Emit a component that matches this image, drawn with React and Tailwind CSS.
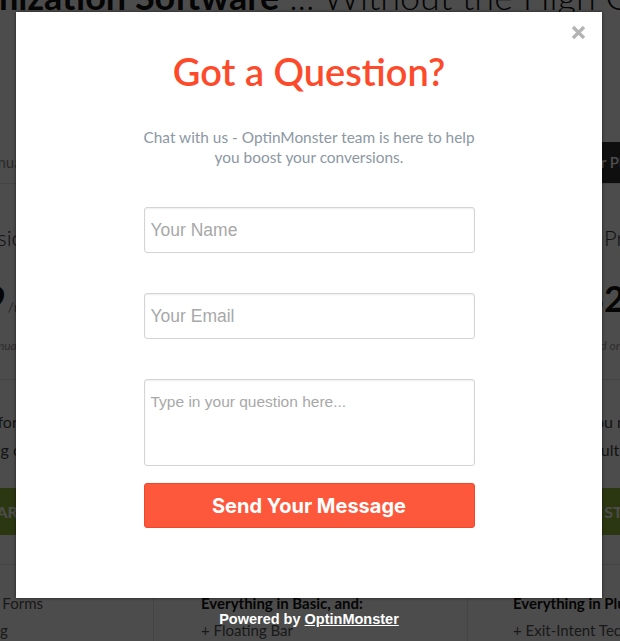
import React from "react";

function CloseIcon() {
  return (
    <svg width="15" height="15" viewBox="0 0 15 15" fill="none">
      <path d="M2 2 L13 13 M13 2 L2 13" stroke="#b4b4b4" strokeWidth="3.4" />
    </svg>
  );
}

function BackgroundPage() {
  return (
    <div className="flex flex-col whitespace-nowrap">
      {/* headline, mostly hidden above the popup */}
      <div className="-ml-[84px] -mt-[25px] text-[36px] leading-[42px] text-[#111]">
        <span className="font-bold">Optimization Software</span>
        <span className="font-light"> ... Without the High Cost</span>
      </div>

      {/* billing toggle band */}
      <div className="mt-[125px] flex h-[42px] items-center border-b border-[#e3e3e3]">
        <div className="-ml-[21px] text-[15px] text-[#8a8a8a]">Annually</div>
        <div className="ml-auto flex h-full w-[64px] items-center bg-[#333] pl-[20px] text-[15px] font-semibold text-white">
          Your Plans
        </div>
      </div>

      <div className="-ml-[67px] grid grid-cols-[220px_314px_220px]">
        {/* plan names */}
        <div className="pl-[40px] pt-[40px] text-[22px] font-light leading-[28px]">Basic</div>
        <div className="pl-[120px] pt-[40px] text-[22px] font-light leading-[28px]">Plus</div>
        <div className="pl-[137px] pt-[40px] text-[22px] font-light leading-[28px]">Pro</div>

        {/* prices */}
        <div className="mt-[26px] flex items-baseline pl-[31px]">
          <span className="text-[36px] font-bold leading-[40px] text-[#111]">$9</span>
          <span className="ml-[2px] text-[14px] text-[#888]">/mo</span>
        </div>
        <div className="mt-[26px] flex items-baseline pl-[110px]">
          <span className="text-[36px] font-bold leading-[40px] text-[#111]">$19</span>
          <span className="ml-[2px] text-[14px] text-[#888]">/mo</span>
        </div>
        <div className="mt-[26px] flex items-baseline pl-[116px]">
          <span className="text-[36px] font-bold leading-[40px] text-[#111]">$29</span>
          <span className="ml-[2px] text-[14px] text-[#888]">/mo</span>
        </div>

        {/* billing notes */}
        <div className="mt-[20px] pl-[23px] text-[12px] italic leading-[16px] text-[#999]">billed annually</div>
        <div className="mt-[20px] pl-[110px] text-[12px] italic leading-[16px] text-[#999]">billed annually</div>
        <div className="mt-[20px] pl-[113px] text-[12px] italic leading-[16px] text-[#999]">billed once a year</div>
      </div>

      <div className="mt-[25px] border-t border-[#e3e3e3]" />

      <div className="-ml-[67px] grid grid-cols-[220px_314px_220px] text-[16px] leading-[28px] text-[#444]">
        <div className="pt-[28px]">
          <div className="pl-[27px]">Ideal for small sites</div>
          <div className="pl-[39px]">using conversion tools</div>
        </div>
        <div className="pl-[60px] pt-[28px]">
          <div>Grow your list faster</div>
          <div>with more campaigns</div>
        </div>
        <div className="pt-[28px]">
          <div className="pl-[120px]">you must have</div>
          <div className="pl-[113px]">results fast</div>
        </div>

        <div className="ml-[4px] mt-[24px] flex h-[47px] w-[120px] items-center justify-center bg-[#8fb83a] text-[16px] font-bold uppercase text-white">
          Get Started
        </div>
        <div className="ml-[100px] mt-[24px] flex h-[47px] w-[120px] items-center justify-center bg-[#8fb83a] text-[16px] font-bold uppercase text-white">
          Get Started
        </div>
        <div className="ml-[55px] mt-[24px] flex h-[47px] w-[200px] items-center justify-center bg-[#8fb83a] text-[16px] font-bold uppercase text-white">
          Get Started
        </div>
      </div>

      <div className="mt-[29px] border-t border-[#e3e3e3]" />

      <div className="-ml-[67px] grid grid-cols-[220px_314px_220px] text-[15px] leading-[27px] text-[#555]">
        <div className="pt-[25px]">
          <div className="pl-[4px]">+ Sidebar Forms</div>
          <div className="-ml-[14px]">+ A/B Testing</div>
        </div>
        <div className="border-l border-[#e3e3e3] pl-[47px] pt-[25px]">
          <div className="font-bold text-[#111]">Everything in Basic, and:</div>
          <div>+ Floating Bar</div>
        </div>
        <div className="border-l border-[#e3e3e3] pl-[45px] pt-[25px]">
          <div className="font-bold text-[#111]">Everything in Plus, and:</div>
          <div>+ Exit-Intent Technology</div>
        </div>
      </div>
    </div>
  );
}

function Field({ placeholder }) {
  return (
    <input
      type="text"
      placeholder={placeholder}
      className="mt-[40px] h-[46px] w-[331px] rounded-[3px] border border-[#d4d4d4] bg-white px-[6px] font-['Liberation_Sans',Arial,sans-serif] text-[17.5px] text-[#333] shadow-[inset_0_1px_2px_rgba(0,0,0,0.07)] outline-none placeholder:text-[#a8a8a8]"
    />
  );
}

export default function App() {
  return (
    <div className="relative h-[641px] w-[620px] overflow-hidden bg-white font-['Lato',sans-serif] text-[#333]">
      <BackgroundPage />

      <div className="absolute inset-0 bg-black/70" />

      <div className="absolute left-[16px] top-[12px] flex h-[586px] w-[586px] flex-col items-center bg-white shadow-[0_0_3px_rgba(0,0,0,0.6)]">
        <button className="absolute right-[16px] top-[13px]" aria-label="Close">
          <CloseIcon />
        </button>

        <h2 className="pt-[36px] text-[38px] font-semibold leading-[46px] text-[#fd4a2a]">Got a Question?</h2>

        <p className="mt-[33px] text-center text-[15.4px] leading-[20px] text-[#8c98a4]">
          Chat with us - OptinMonster team is here to help
          <br />
          you boost your conversions.
        </p>

        <Field placeholder="Your Name" />
        <Field placeholder="Your Email" />

        <textarea
          placeholder="Type in your question here..."
          className="mt-[40px] h-[87px] w-[331px] resize-none rounded-[3px] border border-[#d4d4d4] bg-white px-[6px] pt-[12px] font-['Liberation_Sans',Arial,sans-serif] text-[15.5px] leading-[20px] text-[#333] shadow-[inset_0_1px_2px_rgba(0,0,0,0.07)] outline-none placeholder:text-[#a8a8a8]"
        />

        <button className="mt-[17px] h-[45px] w-[331px] rounded-[3px] border border-[#f0462a] bg-[#fd583c] font-['Inter',sans-serif] text-[20px] font-bold text-white">
          Send Your Message
        </button>
      </div>

      <div className="absolute left-[16px] top-[611px] w-[586px] text-center font-['Liberation_Sans',Arial,sans-serif] text-[14.5px] font-bold leading-[16px] text-white">
        Powered by <span className="underline">OptinMonster</span>
      </div>
    </div>
  );
}
